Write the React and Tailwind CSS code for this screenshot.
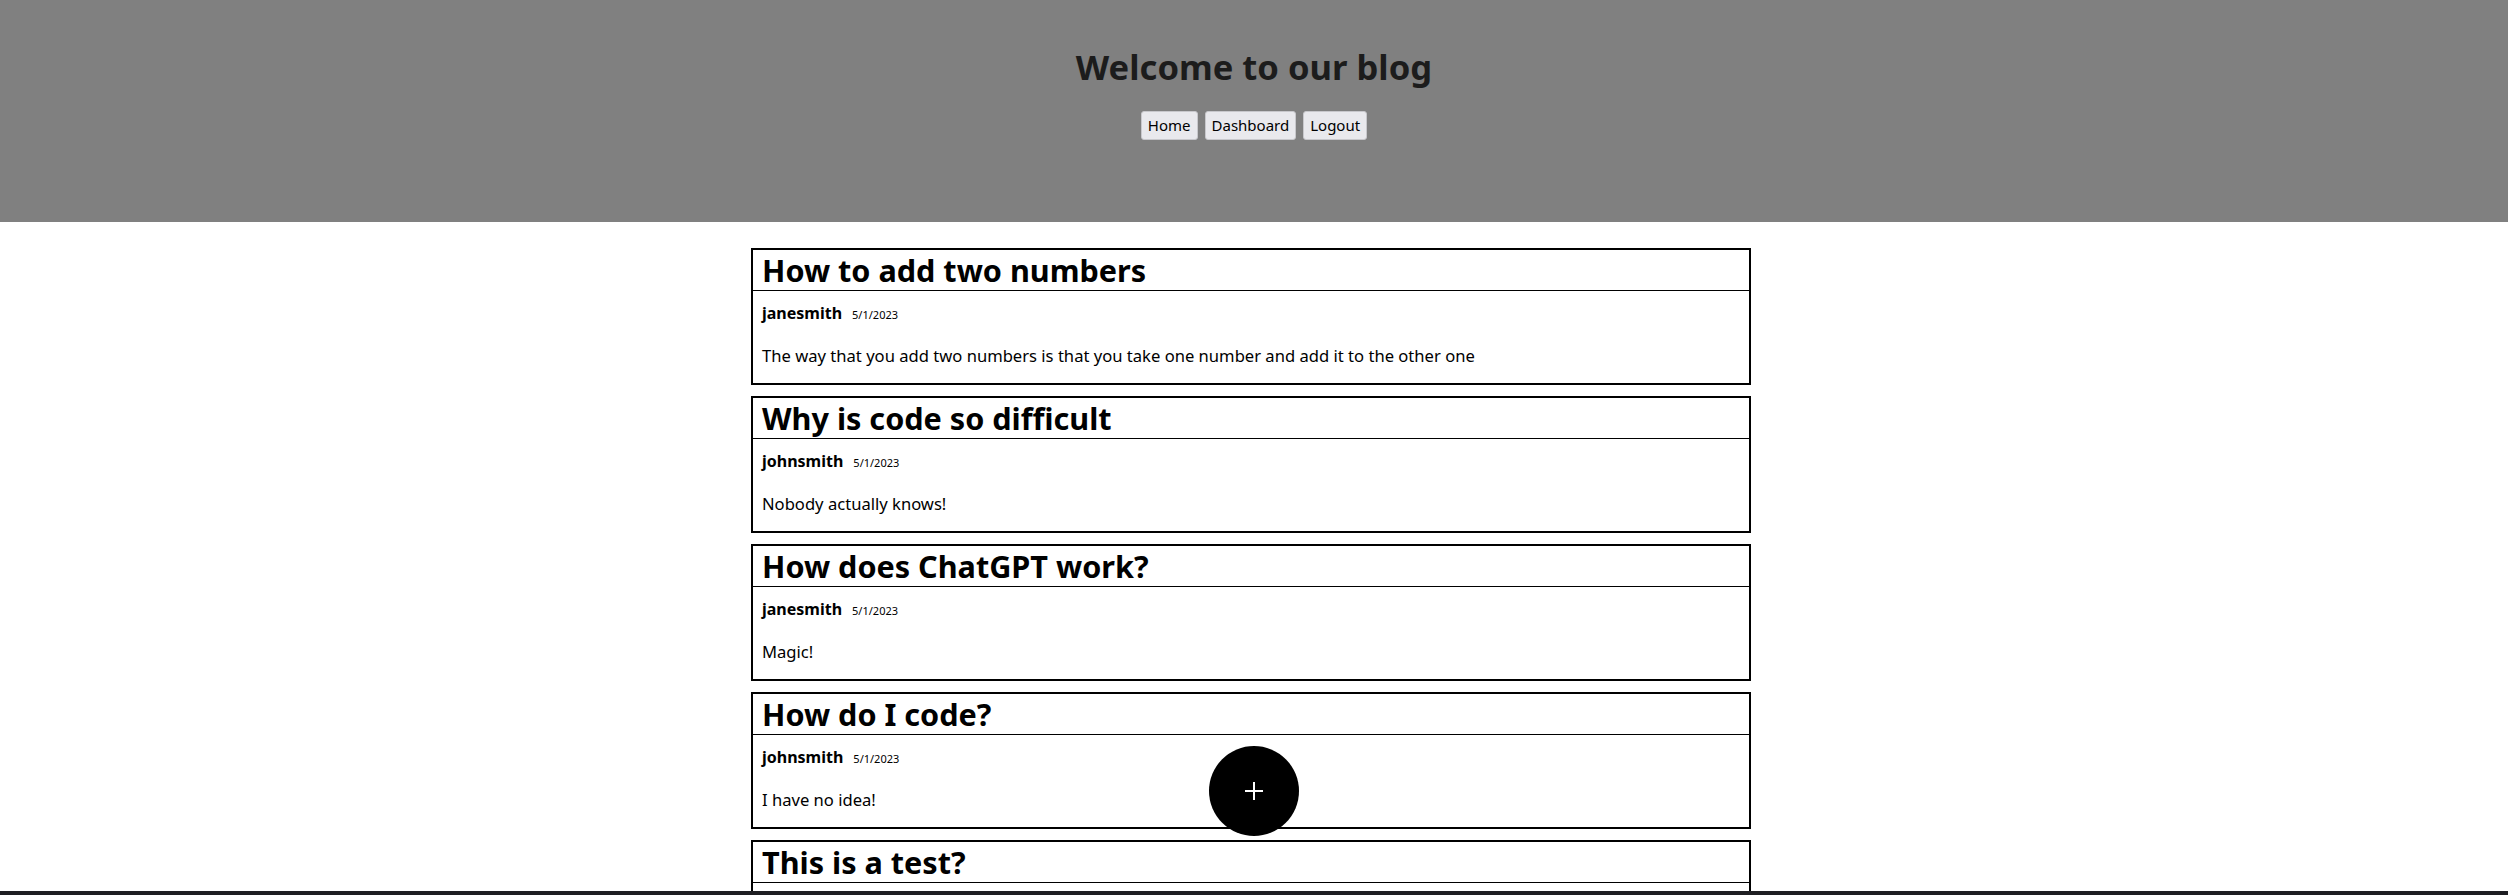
import React from 'react';

const posts = [
  { title: 'How to add two numbers', author: 'janesmith', date: '5/1/2023', body: 'The way that you add two numbers is that you take one number and add it to the other one' },
  { title: 'Why is code so difficult', author: 'johnsmith', date: '5/1/2023', body: 'Nobody actually knows!' },
  { title: 'How does ChatGPT work?', author: 'janesmith', date: '5/1/2023', body: 'Magic!' },
  { title: 'How do I code?', author: 'johnsmith', date: '5/1/2023', body: 'I have no idea!' },
  { title: 'This is a test?', author: 'janesmith', date: '5/1/2023', body: 'Testing testing' },
];

const NavButton = ({ children }) => (
  <button className="h-[29px] px-[6px] text-[15px] text-black bg-[#e9e9ed] border border-[#c8c8cc] rounded-[3px]">
    {children}
  </button>
);

// single blog post card
const PostCard = ({ post }) => (
  <div className="border-2 border-black mb-[11px]">
    <div className="border-b border-black px-[9px]">
      <h1 className="text-[30.6px] leading-[40px] font-bold text-black">{post.title}</h1>
    </div>
    <div className="px-[9px] pt-[10px] pb-[15px]">
      <div className="flex items-baseline gap-[10px] h-[24px]">
        <span className="text-[16px] leading-[24px] font-bold text-black">{post.author}</span>
        <span className="text-[11px] text-black">{post.date}</span>
      </div>
      <p className="mt-[19px] text-[16.6px] leading-[24px] text-black">{post.body}</p>
    </div>
  </div>
);

export default function App() {
  return (
    <div className="min-h-screen bg-white font-['Noto_Sans',sans-serif]">
      <header className="h-[222px] bg-[#808080] flex flex-col items-center pt-[46px]">
        <h1 className="text-[34.6px] leading-[42px] font-bold text-[#1c1c1c]">Welcome to our blog</h1>
        <nav className="flex gap-[7px] mt-[23px]">
          <NavButton>Home</NavButton>
          <NavButton>Dashboard</NavButton>
          <NavButton>Logout</NavButton>
        </nav>
      </header>

      <div className="pr-[6px]">
        <main className="w-[1000px] mx-auto pt-[26px]">
          {posts.map((p) => (
            <PostCard key={p.title} post={p} />
          ))}
        </main>
      </div>

      <button className="fixed bottom-[59px] left-1/2 -translate-x-1/2 w-[90px] h-[90px] rounded-full bg-black flex items-center justify-center">
        <svg width="20" height="20" viewBox="0 0 20 20">
          <path d="M10 1v18M1 10h18" stroke="white" strokeWidth="2" />
        </svg>
      </button>

      <div className="fixed bottom-0 left-0 right-0 h-[4px] bg-[#1e1e22]" />
    </div>
  );
}
